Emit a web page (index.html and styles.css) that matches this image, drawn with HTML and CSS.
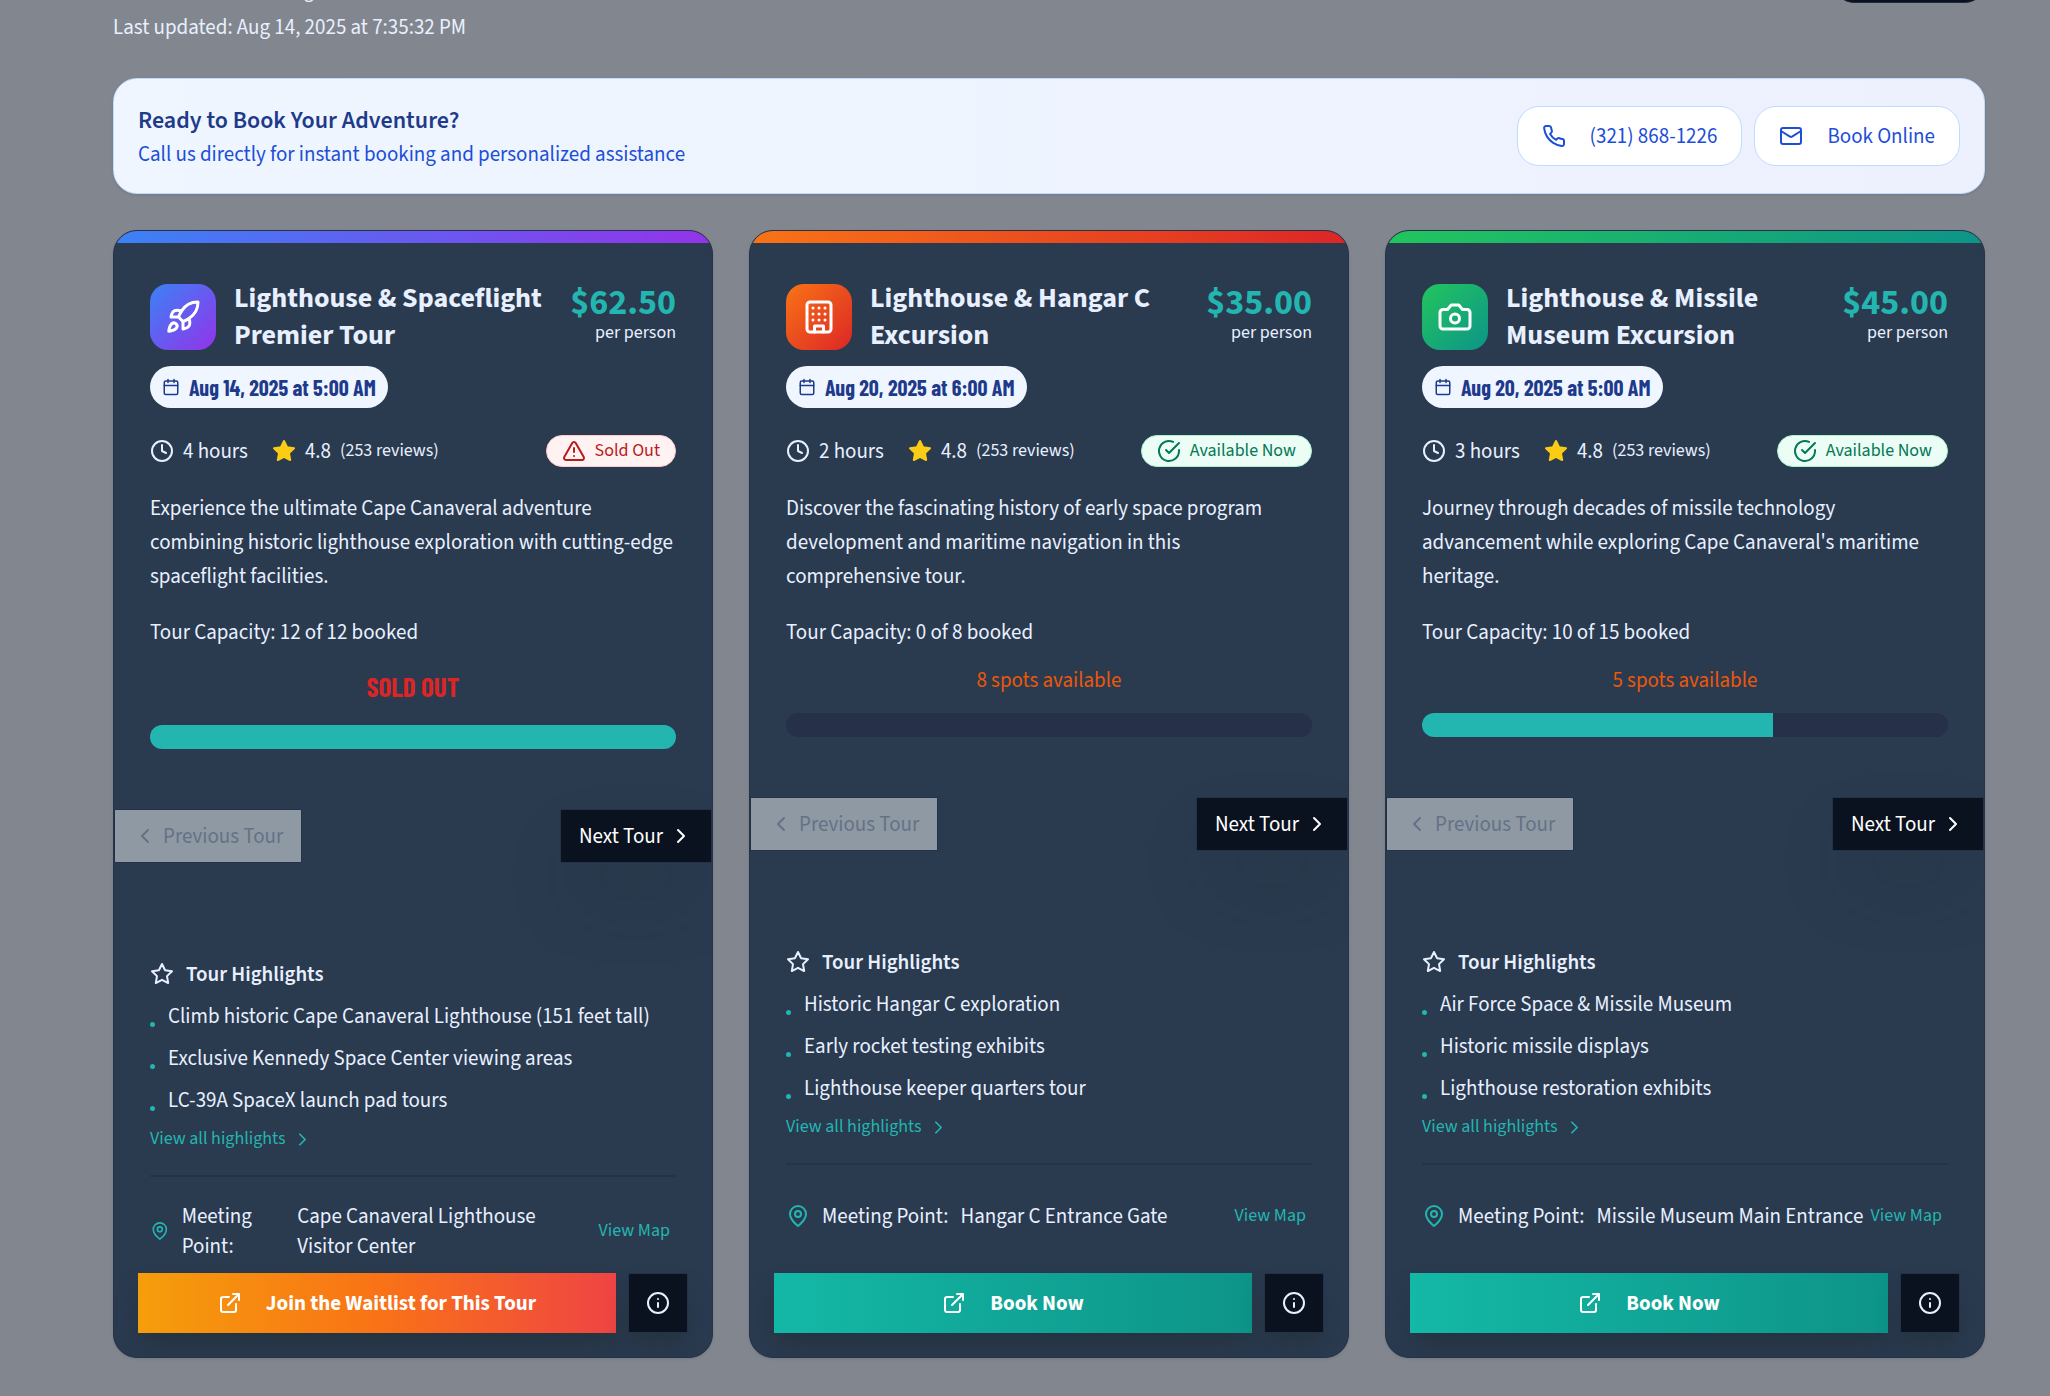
FILE: index.html
```html
<!DOCTYPE html>
<html lang="en">
<head>
<meta charset="utf-8">
<meta name="viewport" content="width=device-width, initial-scale=1">
<title>Lighthouse Tours</title>
<link rel="stylesheet" href="styles.css">
</head>
<body>
<svg class="sprite" aria-hidden="true">
  <symbol id="phone" viewBox="0 0 24 24"><path d="M22 16.92v3a2 2 0 0 1-2.18 2 19.79 19.79 0 0 1-8.63-3.07 19.5 19.5 0 0 1-6-6 19.79 19.79 0 0 1-3.07-8.67A2 2 0 0 1 4.11 2h3a2 2 0 0 1 2 1.72 12.84 12.84 0 0 0 .7 2.81 2 2 0 0 1-.45 2.11L8.09 9.91a16 16 0 0 0 6 6l1.27-1.27a2 2 0 0 1 2.11-.45 12.84 12.84 0 0 0 2.81.7A2 2 0 0 1 22 16.92z"/></symbol>
  <symbol id="mail" viewBox="0 0 24 24"><rect x="2" y="4" width="20" height="16" rx="2"/><path d="m22 7-8.97 5.7a1.94 1.94 0 0 1-2.06 0L2 7"/></symbol>
  <symbol id="rocket" viewBox="0 0 24 24"><path d="M4.5 16.5c-1.5 1.26-2 5-2 5s3.74-.5 5-2c.71-.84.7-2.13-.09-2.91a2.18 2.18 0 0 0-2.91-.09z"/><path d="m12 15-3-3a22 22 0 0 1 2-3.95A12.88 12.88 0 0 1 22 2c0 2.72-.78 7.5-6 11a22.35 22.35 0 0 1-4 2z"/><path d="M9 12H4s.55-3.03 2-4c1.62-1.08 5 0 5 0"/><path d="M12 15v5s3.03-.55 4-2c1.08-1.62 0-5 0-5"/></symbol>
  <symbol id="building" viewBox="0 0 24 24"><rect x="4" y="2" width="16" height="20" rx="2"/><path d="M9 22v-4h6v4M8 6h.01M16 6h.01M12 6h.01M12 10h.01M12 14h.01M16 10h.01M16 14h.01M8 10h.01M8 14h.01"/></symbol>
  <symbol id="camera" viewBox="0 0 24 24"><path d="M14.5 4h-5L7 7H4a2 2 0 0 0-2 2v9a2 2 0 0 0 2 2h16a2 2 0 0 0 2-2V9a2 2 0 0 0-2-2h-3l-2.500-3z"/><circle cx="12" cy="13" r="3"/></symbol>
  <symbol id="calendar" viewBox="0 0 24 24"><path d="M8 2v4M16 2v4"/><rect x="3" y="4" width="18" height="18" rx="2"/><path d="M3 10h18"/></symbol>
  <symbol id="clock" viewBox="0 0 24 24"><circle cx="12" cy="12" r="10"/><path d="M12 6v6l4 2"/></symbol>
  <symbol id="star" viewBox="0 0 24 24"><path d="m12 2 3.090 6.260L22 9.270l-5 4.870 1.180 6.880L12 17.770l-6.180 3.250L7 14.140 2 9.270l6.910-1.010L12 2z"/></symbol>
  <symbol id="alert" viewBox="0 0 24 24"><path d="m21.730 18-8-14a2 2 0 0 0-3.480 0l-8 14A2 2 0 0 0 4 21h16a2 2 0 0 0 1.730-3z"/><path d="M12 9v4M12 17h.01"/></symbol>
  <symbol id="check" viewBox="0 0 24 24"><path d="M22 11.080V12a10 10 0 1 1-5.930-9.140"/><path d="m9 11 3 3L22 4"/></symbol>
  <symbol id="left" viewBox="0 0 24 24"><path d="m15 18-6-6 6-6"/></symbol>
  <symbol id="right" viewBox="0 0 24 24"><path d="m9 18 6-6-6-6"/></symbol>
  <symbol id="pin" viewBox="0 0 24 24"><path d="M20 10c0 6-8 12-8 12s-8-6-8-12a8 8 0 0 1 16 0z"/><circle cx="12" cy="10" r="3"/></symbol>
  <symbol id="external" viewBox="0 0 24 24"><path d="M15 3h6v6M10 14 21 3M18 13v6a2 2 0 0 1-2 2H5a2 2 0 0 1-2-2V8a2 2 0 0 1 2-2h6"/></symbol>
  <symbol id="info" viewBox="0 0 24 24"><circle cx="12" cy="12" r="10"/><path d="M12 16v-4M12 8h.01"/></symbol>
</svg>

<main class="page">
  <header class="page-head">
    <div>
      <p class="lead">Real-time tour booking</p>
      <p>Last updated: Aug 14, 2025 at 7:35:32 PM</p>
    </div>
    <button class="refresh" type="button" aria-label="Refresh"></button>
  </header>

  <section class="banner">
    <div>
      <h2 class="banner-title">Ready to Book Your Adventure?</h2>
      <p>Call us directly for instant booking and personalized assistance</p>
    </div>
    <div class="banner-actions">
      <button class="contact" type="button"><svg class="icon"><use href="#phone"/></svg>(321) 868-1226</button>
      <button class="contact" type="button"><svg class="icon"><use href="#mail"/></svg>Book Online</button>
    </div>
  </section>

  <section class="tours">
    <article class="card theme-space">
      <div class="stripe"></div>
      <div class="body">
        <div class="head">
          <span class="tile"><svg class="icon icon-lg"><use href="#rocket"/></svg></span>
          <h3 class="title">Lighthouse &amp; Spaceflight Premier Tour</h3>
          <div class="cost"><strong class="price">$62.50</strong><span class="per">per person</span></div>
        </div>
        <div class="date"><svg class="icon icon-sm"><use href="#calendar"/></svg>Aug 14, 2025 at 5:00 AM</div>
        <div class="facts">
          <span class="fact"><svg class="icon"><use href="#clock"/></svg>4 hours</span>
          <span class="fact"><svg class="icon filled"><use href="#star"/></svg>4.8 <small class="reviews">(253 reviews)</small></span>
          <span class="badge badge-out"><svg class="icon"><use href="#alert"/></svg>Sold Out</span>
        </div>
        <p class="desc">Experience the ultimate Cape Canaveral adventure combining historic lighthouse exploration with cutting-edge spaceflight facilities.</p>
        <p class="capacity">Tour Capacity: 12 of 12 booked</p>
        <p class="sold-out">SOLD OUT</p>
        <div class="track"><div class="fill" style="width:100%"></div></div>
      </div>
      <nav class="switch" aria-label="Tours">
        <button class="step" type="button" disabled><svg class="icon"><use href="#left"/></svg>Previous Tour</button>
        <button class="step step-next" type="button">Next Tour<svg class="icon"><use href="#right"/></svg></button>
      </nav>
      <div class="details">
        <h4 class="subhead"><svg class="icon"><use href="#star"/></svg>Tour Highlights</h4>
        <ul class="highlights">
          <li>Climb historic Cape Canaveral Lighthouse (151 feet tall)</li>
          <li>Exclusive Kennedy Space Center viewing areas</li>
          <li>LC-39A SpaceX launch pad tours</li>
        </ul>
        <button class="more" type="button">View all highlights<svg class="icon icon-md"><use href="#right"/></svg></button>
        <div class="meeting">
          <div class="where">
            <svg class="icon pin"><use href="#pin"/></svg>
            <span>Meeting Point:</span>
            <span>Cape Canaveral Lighthouse Visitor Center</span>
          </div>
          <button class="map" type="button">View Map</button>
        </div>
      </div>
      <div class="actions">
        <button class="book waitlist" type="button"><svg class="icon"><use href="#external"/></svg>Join the Waitlist for This Tour</button>
        <button class="about" type="button" aria-label="Tour details"><svg class="icon"><use href="#info"/></svg></button>
      </div>
    </article>

    <article class="card theme-hangar">
      <div class="stripe"></div>
      <div class="body">
        <div class="head">
          <span class="tile"><svg class="icon icon-lg"><use href="#building"/></svg></span>
          <h3 class="title">Lighthouse &amp; Hangar C Excursion</h3>
          <div class="cost"><strong class="price">$35.00</strong><span class="per">per person</span></div>
        </div>
        <div class="date"><svg class="icon icon-sm"><use href="#calendar"/></svg>Aug 20, 2025 at 6:00 AM</div>
        <div class="facts">
          <span class="fact"><svg class="icon"><use href="#clock"/></svg>2 hours</span>
          <span class="fact"><svg class="icon filled"><use href="#star"/></svg>4.8 <small class="reviews">(253 reviews)</small></span>
          <span class="badge badge-open"><svg class="icon"><use href="#check"/></svg>Available Now</span>
        </div>
        <p class="desc">Discover the fascinating history of early space program development and maritime navigation in this comprehensive tour.</p>
        <p class="capacity">Tour Capacity: 0 of 8 booked</p>
        <p class="spots">8 spots available</p>
        <div class="track"><div class="fill" style="width:0%"></div></div>
      </div>
      <nav class="switch" aria-label="Tours">
        <button class="step" type="button" disabled><svg class="icon"><use href="#left"/></svg>Previous Tour</button>
        <button class="step step-next" type="button">Next Tour<svg class="icon"><use href="#right"/></svg></button>
      </nav>
      <div class="details">
        <h4 class="subhead"><svg class="icon"><use href="#star"/></svg>Tour Highlights</h4>
        <ul class="highlights">
          <li>Historic Hangar C exploration</li>
          <li>Early rocket testing exhibits</li>
          <li>Lighthouse keeper quarters tour</li>
        </ul>
        <button class="more" type="button">View all highlights<svg class="icon icon-md"><use href="#right"/></svg></button>
        <div class="meeting">
          <div class="where">
            <svg class="icon pin"><use href="#pin"/></svg>
            <span>Meeting Point:</span>
            <span>Hangar C Entrance Gate</span>
          </div>
          <button class="map" type="button">View Map</button>
        </div>
      </div>
      <div class="actions">
        <button class="book" type="button"><svg class="icon"><use href="#external"/></svg>Book Now</button>
        <button class="about" type="button" aria-label="Tour details"><svg class="icon"><use href="#info"/></svg></button>
      </div>
    </article>

    <article class="card theme-missile">
      <div class="stripe"></div>
      <div class="body">
        <div class="head">
          <span class="tile"><svg class="icon icon-lg"><use href="#camera"/></svg></span>
          <h3 class="title">Lighthouse &amp; Missile Museum Excursion</h3>
          <div class="cost"><strong class="price">$45.00</strong><span class="per">per person</span></div>
        </div>
        <div class="date"><svg class="icon icon-sm"><use href="#calendar"/></svg>Aug 20, 2025 at 5:00 AM</div>
        <div class="facts">
          <span class="fact"><svg class="icon"><use href="#clock"/></svg>3 hours</span>
          <span class="fact"><svg class="icon filled"><use href="#star"/></svg>4.8 <small class="reviews">(253 reviews)</small></span>
          <span class="badge badge-open"><svg class="icon"><use href="#check"/></svg>Available Now</span>
        </div>
        <p class="desc">Journey through decades of missile technology advancement while exploring Cape Canaveral's maritime heritage.</p>
        <p class="capacity">Tour Capacity: 10 of 15 booked</p>
        <p class="spots">5 spots available</p>
        <div class="track"><div class="fill" style="width:66.67%"></div></div>
      </div>
      <nav class="switch" aria-label="Tours">
        <button class="step" type="button" disabled><svg class="icon"><use href="#left"/></svg>Previous Tour</button>
        <button class="step step-next" type="button">Next Tour<svg class="icon"><use href="#right"/></svg></button>
      </nav>
      <div class="details">
        <h4 class="subhead"><svg class="icon"><use href="#star"/></svg>Tour Highlights</h4>
        <ul class="highlights">
          <li>Air Force Space &amp; Missile Museum</li>
          <li>Historic missile displays</li>
          <li>Lighthouse restoration exhibits</li>
        </ul>
        <button class="more" type="button">View all highlights<svg class="icon icon-md"><use href="#right"/></svg></button>
        <div class="meeting">
          <div class="where">
            <svg class="icon pin"><use href="#pin"/></svg>
            <span>Meeting Point:</span>
            <span>Missile Museum Main Entrance</span>
          </div>
          <button class="map" type="button">View Map</button>
        </div>
      </div>
      <div class="actions">
        <button class="book" type="button"><svg class="icon"><use href="#external"/></svg>Book Now</button>
        <button class="about" type="button" aria-label="Tour details"><svg class="icon"><use href="#info"/></svg></button>
      </div>
    </article>
  </section>
</main>
</body>
</html>
```

FILE: styles.css
```css
:root {
  --bg: #82868e;
  --card: #2a3a4f;
  --line: #263248;
  --ink: #e8f0ff;
  --teal: #23b5af;
  --dark: #0b121f;
  --blue: #1d4ed8;
  --navy: #1e3a8a;
}

* { box-sizing: border-box; margin: 0; padding: 0; }

html { background: var(--bg); }

body {
  font: 21px/30px "Source Sans Pro", "Source Sans 3", "Noto Sans CJK SC", "Noto Sans", sans-serif;
  color: var(--ink);
  overflow-x: hidden;
}

button { font: inherit; color: inherit; border: 0; background: none; cursor: pointer; }

.sprite { display: none; }

.icon {
  width: 24px;
  height: 24px;
  flex-shrink: 0;
  fill: none;
  stroke: currentColor;
  stroke-width: 2;
  stroke-linecap: round;
  stroke-linejoin: round;
}
.icon-sm { width: 18px; height: 18px; }
.icon-md { width: 21px; height: 21px; }
.icon-lg { width: 36px; height: 36px; }
.filled { fill: #facc15; stroke: #facc15; }

.page { padding: 0 65px 36px 113px; }

.page-head {
  display: flex;
  justify-content: space-between;
  align-items: flex-start;
  margin: -25px 0 36px;
}
.lead { margin-bottom: 7px; }

.refresh {
  width: 151px;
  height: 60px;
  margin: -32px 0 0;
  border: 1px solid #1e293b;
  border-radius: 20px;
  background: var(--dark);
}

.banner {
  display: flex;
  justify-content: space-between;
  align-items: center;
  margin-bottom: 36px;
  padding: 24px;
  border: 1px solid #bfdbfe;
  border-radius: 24px;
  background: linear-gradient(90deg, #eff6ff, #edf1fe);
  box-shadow: 0 1px 3px rgba(0, 0, 0, .1);
  color: var(--blue);
}
.banner-title { font-size: 24px; font-weight: 600; line-height: 36px; color: var(--navy); }
.banner-actions { display: flex; gap: 12px; }

.contact {
  display: flex;
  align-items: center;
  gap: 24px;
  height: 60px;
  padding: 0 24px;
  border: 1px solid #bfdbfe;
  border-radius: 22px;
  background: #fff;
}

.tours { display: grid; grid-template-columns: repeat(3, 1fr); gap: 36px; }

.card {
  display: flex;
  flex-direction: column;
  overflow: hidden;
  border: 1px solid var(--line);
  border-radius: 24px;
  background: var(--card);
  box-shadow: 0 1px 3px rgba(0, 0, 0, .1);
}
.theme-space { --from: #3b82f6; --to: #9333ea; }
.theme-hangar { --from: #f97316; --to: #dc2626; }
.theme-missile { --from: #22c55e; --to: #0d9488; }

.stripe { height: 12px; background: linear-gradient(90deg, var(--from), var(--to)); }

.body { padding: 37px 36px 60px; }

.head { display: flex; align-items: center; gap: 18px; margin-bottom: 12px; }
.tile {
  display: grid;
  place-items: center;
  flex-shrink: 0;
  width: 66px;
  height: 66px;
  border-radius: 18px;
  background: linear-gradient(135deg, var(--from), var(--to));
  color: #fff;
}
.title { flex: 1; font-size: 28px; font-weight: 700; line-height: 37px; }
.cost { flex-shrink: 0; padding-bottom: 4px; text-align: right; }
.price { display: block; font-size: 36px; line-height: 36px; color: var(--teal); }
.per { display: block; font-size: 18px; line-height: 24px; }

.date {
  display: flex;
  align-items: center;
  gap: 9px;
  width: fit-content;
  height: 42px;
  margin-bottom: 27px;
  padding: 0 12px;
  border-radius: 21px;
  background: #eff6ff;
  color: var(--navy);
  font: 700 22px/30px "Barlow Condensed", "Roboto Condensed", "Liberation Sans Narrow", sans-serif;
}

.facts { display: flex; align-items: center; gap: 24px; margin-bottom: 24px; }
.fact { display: flex; align-items: center; gap: 9px; }
.reviews { font-size: 18px; }
.badge {
  display: flex;
  align-items: center;
  gap: 9px;
  height: 32px;
  margin-left: auto;
  padding: 0 15px;
  border: 1px solid;
  border-radius: 16px;
  font-size: 18px;
}
.badge-out { border-color: #fecaca; background: #fef2f2; color: #b91c1c; }
.badge-open { border-color: #a7f3d0; background: #ecfdf5; color: #047857; }

.desc { margin-bottom: 24px; line-height: 34px; }
.capacity { margin-bottom: 18px; }
.spots, .sold-out { margin-bottom: 18px; text-align: center; }
.spots { color: #ea580c; }
.sold-out {
  color: #dc2626;
  font: 700 27px/42px "Barlow Condensed", "Roboto Condensed", "Liberation Sans Narrow", sans-serif;
}
.track { height: 24px; overflow: hidden; border-radius: 12px; background: #263048; }
.fill { height: 100%; background: var(--teal); }

.switch { display: flex; justify-content: space-between; margin-bottom: 96px; }
.step {
  display: flex;
  align-items: center;
  gap: 6px;
  height: 54px;
  padding: 0 18px;
  border: 1px solid var(--line);
  background: var(--dark);
  color: #fff;
}
.step:disabled { background: #8e99a4; color: #657286; }
.step-next { box-shadow: 0 38px 75px -18px rgba(32, 50, 48, .4); }

.details { padding: 0 36px; }
.subhead {
  display: flex;
  align-items: center;
  gap: 12px;
  margin-bottom: 12px;
  font-size: 21px;
  font-weight: 600;
}
.highlights { display: grid; gap: 12px; margin-bottom: 12px; list-style: none; }
.highlights li { display: flex; align-items: center; gap: 13px; }
.highlights li::before {
  content: "";
  width: 5px;
  height: 5px;
  margin-top: 16px;
  border-radius: 3px;
  background: var(--teal);
}
.more {
  display: flex;
  align-items: center;
  gap: 6px;
  font-size: 18px;
  line-height: 24px;
  color: var(--teal);
}
.meeting {
  display: flex;
  align-items: center;
  justify-content: space-between;
  margin-top: 24px;
  padding-top: 24px;
  border-top: 2px solid var(--line);
}
.where { display: flex; align-items: center; gap: 12px; min-width: 0; }
.pin { flex-shrink: 1; color: var(--teal); }
.map { flex-shrink: 0; height: 54px; padding: 0 6px; font-size: 18px; color: var(--teal); }

.actions { display: flex; gap: 12px; margin-top: auto; padding: 12px 24px 24px; }
.book {
  display: flex;
  flex: 1;
  align-items: center;
  justify-content: center;
  gap: 24px;
  height: 60px;
  background: linear-gradient(90deg, #14b8a6, #0d9488);
  box-shadow: 0 15px 22px -4px rgba(32, 45, 48, .5);
  color: #fff;
  font-weight: 700;
}
.waitlist { background: linear-gradient(90deg, #f59e0b, #f97316, #ef4444); }
.about {
  display: grid;
  place-items: center;
  width: 60px;
  height: 60px;
  border: 1px solid var(--line);
  background: var(--dark);
  box-shadow: 0 15px 22px -4px rgba(32, 45, 48, .5);
}
```
